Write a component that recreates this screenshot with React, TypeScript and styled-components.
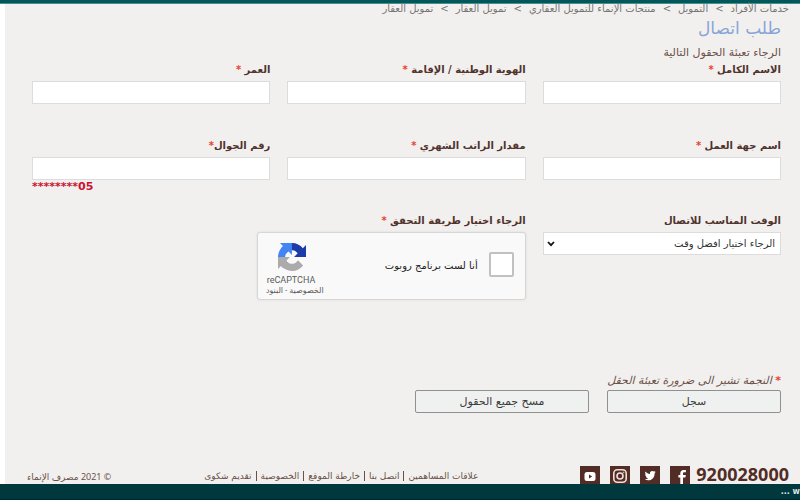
import React from "react";
import styled, { createGlobalStyle } from "styled-components";

const GlobalStyle = createGlobalStyle`
  * { box-sizing: border-box; }
  body {
    margin: 0;
    background: #ffffff;
    color: #4f332c;
    font-family: "DejaVu Sans", "Noto Sans", sans-serif;
    font-size: 11px;
    line-height: 14px;
  }
  a { color: inherit; text-decoration: none; }
  button, input, select { font: inherit; color: inherit; }
`;

const Page = styled.div`
  min-height: 100vh;
  display: flex;
  flex-direction: column;
`;

const TopBar = styled.div`
  height: 4px;
  background: #00585b;
  border-bottom: 1px solid #4f8b8c;
`;

const Content = styled.main`
  flex: 1;
  display: flex;
  flex-direction: column;
  margin-left: 5px;
  padding: 0 19px 0 27px;
  background: #f2f0ef;
`;

const Breadcrumb = styled.nav`
  display: flex;
  gap: 7px;
  margin: -2px -8px 0 0;
  color: #777574;
  font-size: 10px;
  white-space: nowrap;
`;

const Title = styled.h1`
  margin: 1px 0 0;
  color: #87a5d6;
  font-size: 17px;
  font-weight: 400;
  line-height: 22px;
`;

const Intro = styled.p`
  margin: 7px 0 0;
  color: #6b5149;
`;

const Fields = styled.div`
  display: grid;
  grid-template-columns: repeat(3, minmax(0, 1fr));
  column-gap: 17px;
  grid-template-rows: 76px 75px auto;
  margin-top: 3px;
`;

const Field = styled.div`
  display: flex;
  flex-direction: column;
  align-items: stretch;
`;

const Label = styled.label`
  font-size: 10px;
  font-weight: 700;
  margin-bottom: 4px;
  white-space: nowrap;
`;

const Star = styled.span`
  color: #e8402f;
  font-weight: 700;
  font-style: normal;
`;

const TextInput = styled.input`
  width: 100%;
  height: 23px;
  padding: 0 5px;
  border: 1px solid #dddcdc;
  border-radius: 0;
  background: #ffffff;
`;

const Hint = styled.span`
  color: #cc1230;
  font-weight: 700;
  text-align: left;
  direction: ltr;
`;

const SelectWrap = styled.div`
  display: grid;
  align-items: center;
  > * { grid-area: 1 / 1; }
`;

const Select = styled.select`
  appearance: none;
  width: 100%;
  height: 23px;
  padding: 0 5px;
  border: 1px solid #dddcdc;
  border-radius: 0;
  background: #ffffff;
  color: #333333;
  font-size: 10px;
`;

const Chevron = styled.svg`
  justify-self: end;
  margin-left: 4px;
  pointer-events: none;
`;

const Captcha = styled.div`
  width: 269px;
  height: 68px;
  display: flex;
  align-items: center;
  padding: 0 11px 0 9px;
  border: 1px solid #d6d6d6;
  border-radius: 3px;
  background: #f9f9f9;
  box-shadow: 0 0 3px #00000014;
`;

const CaptchaBox = styled.input`
  appearance: none;
  width: 25px;
  height: 25px;
  margin: 0 0 3px;
  border: 2px solid #c1c1c1;
  border-radius: 2px;
  background: #ffffff;
`;

const CaptchaLabel = styled.label`
  flex: 1;
  margin-right: 11px;
  color: #222222;
  font-size: 10px;
`;

const CaptchaBrand = styled.div`
  width: 57px;
  display: flex;
  flex-direction: column;
  padding-top: 6px;
  color: #5b5b5b;
  font-family: Roboto, "DejaVu Sans", sans-serif;
  font-size: 9px;
  line-height: 12px;
  white-space: nowrap;
  direction: ltr;
  > svg { margin: 0 0 3px 11px; }
`;

const CaptchaLinks = styled.div`
  direction: rtl;
  text-align: right;
  font-size: 8px;
  line-height: 10px;
`;

const Note = styled.p`
  margin: 74px 0 0;
  color: #6b5149;
  font-style: italic;
`;

const Actions = styled.div`
  display: flex;
  gap: 18px;
  margin-top: 2px;
`;

const Button = styled.button`
  width: 174px;
  height: 23px;
  padding: 0;
  border: 1px solid #8d9190;
  border-radius: 2px;
  background: #eff0f0;
  color: #3b3b3b;
`;

const Footer = styled.footer`
  display: flex;
  align-items: flex-end;
  margin-top: auto;
  margin-right: -8px;
  color: #69514a;
  font-size: 9px;
  line-height: 14px;
  white-space: nowrap;
`;

const Phone = styled.a`
  color: #512d26;
  font-family: "Noto Sans", sans-serif;
  font-size: 18px;
  font-weight: 700;
  line-height: 19px;
`;

const Social = styled.div`
  display: flex;
  gap: 10px;
  margin-right: 6px;
`;

const SocialLink = styled.a`
  width: 20px;
  height: 18px;
  overflow: hidden;
  background: #512d26;
  > svg { display: block; }
`;

const FooterLinks = styled.nav`
  display: flex;
  margin-right: 102px;
  > a {
    line-height: 10px;
    margin-bottom: 3px;
  }
  > a + a {
    margin-right: 4px;
    padding-right: 4px;
    border-right: 1px solid #69514a;
  }
`;

const Copyright = styled.span`
  margin-right: auto;
  margin-left: -5px;
  font-family: "Noto Sans", "DejaVu Sans", sans-serif;
`;

const BottomBar = styled.div`
  height: 16px;
  display: flex;
  justify-content: flex-end;
  background: #00383d;
  border-bottom: 1px solid #00292d;
  color: #d7e4e5;
  font-size: 8px;
  font-weight: 700;
  line-height: 16px;
`;

const crumbs = [
  "خدمات الأفراد",
  "التمويل",
  "منتجات الإنماء للتمويل العقاري",
  "تمويل العقار",
  "تمويل العقار",
];

const footerLinks = ["علاقات المساهمين", "اتصل بنا", "خارطة الموقع", "الخصوصية", "تقديم شكوى"];

const fields = [
  { id: "name", label: "الاسم الكامل " },
  { id: "identity", label: "الهوية الوطنية / الإقامة " },
  { id: "age", label: "العمر " },
  { id: "employer", label: "اسم جهة العمل " },
  { id: "salary", label: "مقدار الراتب الشهري " },
  { id: "mobile", label: "رقم الجوال", hint: "********05" },
];

const RecaptchaLogo = () => (
  <svg width="28" height="28" viewBox="0 0 64 64" aria-hidden="true">
    <path
      d="M64 31.955l-.033-1.37V4.687l-7.16 7.16C50.948 4.674 42.033.093 32.05.093c-10.4 0-19.622 4.96-25.458 12.64l11.736 11.86a15.55 15.55 0 0 1 4.754-5.334c2.05-1.6 4.952-2.906 8.968-2.906.485 0 .86.057 1.135.163 4.976.393 9.288 3.14 11.828 7.124l-8.307 8.307L64 31.953"
      fill="#1c3aa9"
    />
    <path
      d="M31.862.094l-1.37.033H4.594l7.16 7.16C4.58 13.147 0 22.06 0 32.046c0 10.4 4.96 19.622 12.64 25.458L24.5 45.768a15.55 15.55 0 0 1-5.334-4.754c-1.6-2.05-2.906-4.952-2.906-8.968 0-.485.057-.86.163-1.135.393-4.976 3.14-9.288 7.124-11.828l8.307 8.307L31.86.095"
      fill="#4285f4"
    />
    <path
      d="M.001 32.045l.033 1.37v25.898l7.16-7.16c5.86 7.173 14.774 11.754 24.76 11.754 10.4 0 19.622-4.96 25.458-12.64l-11.736-11.86a15.55 15.55 0 0 1-4.754 5.334c-2.05 1.6-4.952 2.906-8.968 2.906-.485 0-.86-.057-1.135-.163-4.976-.393-9.288-3.14-11.828-7.124l8.307-8.307c-10.522.04-22.4.066-27.295-.005"
      fill="#ababab"
    />
  </svg>
);

const socials = [
  {
    name: "Facebook",
    art: <path d="M11 18V11.500H13.400L13.800 9H11V7.600C11 6.700 11.400 6.200 12.500 6.200H13.900V4H11.700C9.400 4 8.300 5.300 8.300 7.200V9H6.400V11.500H8.300V18Z" fill="#fff" transform="translate(2 0)" />,
  },
  {
    name: "Twitter",
    art: <path d="M5 13.200C6.400 13.200 7.300 12.900 8 12.300C6.900 12.200 6.200 11.500 5.900 10.600H6.800C5.700 10.200 5.100 9.400 5.100 8.200L6 8.500C5.100 7.700 4.900 6.500 5.400 5.500C6.700 7 8.200 7.800 10 7.900C9.600 5.900 11 4.900 12.200 4.900C12.900 4.900 13.500 5.200 13.900 5.600L15.400 5.100L14.500 6.400L15.700 6.100L14.600 7.400C14.700 11.500 11.700 14.300 8.200 14.300C7 14.300 5.900 13.900 5 13.200Z" fill="#fff" />,
  },
  {
    name: "Instagram",
    art: (
      <g fill="none" stroke="#f1dfd9" strokeWidth="1.600">
        <rect x="3.800" y="3.800" width="12.400" height="12.400" rx="3.500" />
        <circle cx="10" cy="10" r="3" />
        <circle cx="13.600" cy="6.400" r=".4" strokeWidth="1" />
      </g>
    ),
  },
  {
    name: "YouTube",
    art: (
      <>
        <rect x="4.500" y="6" width="11" height="9" rx="2.500" fill="#fff" />
        <path d="M9 8.500V12.500L12.200 10.500Z" fill="#512d26" />
      </>
    ),
  },
];

export default function App() {
  return (
    <Page dir="rtl" lang="ar">
      <GlobalStyle />
      <TopBar />
      <Content>
        <Breadcrumb>
          {crumbs.map((crumb, i) => (
            <React.Fragment key={i}>
              {i > 0 && <span>&gt;</span>}
              <a href="#">{crumb}</a>
            </React.Fragment>
          ))}
        </Breadcrumb>
        <Title>طلب اتصال</Title>
        <Intro>الرجاء تعبئة الحقول التالية</Intro>
        <form onSubmit={(e) => e.preventDefault()}>
          <Fields>
            {fields.map((f) => (
              <Field key={f.id}>
                <Label htmlFor={f.id}>
                  {f.label}
                  <Star>*</Star>
                </Label>
                <TextInput id={f.id} type="text" />
                {f.hint && <Hint>{f.hint}</Hint>}
              </Field>
            ))}
            <Field>
              <Label htmlFor="time">الوقت المناسب للاتصال</Label>
              <SelectWrap>
                <Select id="time">
                  <option>الرجاء اختيار افضل وقت</option>
                </Select>
                <Chevron width="8" height="6" viewBox="0 0 8 6" aria-hidden="true">
                  <path d="M1 1L4 4.200L7 1" fill="none" stroke="#111" strokeWidth="1.800" />
                </Chevron>
              </SelectWrap>
            </Field>
            <Field>
              <Label as="span">
                الرجاء اختيار طريقة التحقق <Star>*</Star>
              </Label>
              <Captcha>
                <CaptchaBox id="robot" type="checkbox" />
                <CaptchaLabel htmlFor="robot">أنا لست برنامج روبوت</CaptchaLabel>
                <CaptchaBrand>
                  <RecaptchaLogo />
                  <span>reCAPTCHA</span>
                  <CaptchaLinks>
                    <a href="#">الخصوصية</a> - <a href="#">البنود</a>
                  </CaptchaLinks>
                </CaptchaBrand>
              </Captcha>
            </Field>
          </Fields>
          <Note>
            <Star>*</Star> النجمة تشير الى ضرورة تعبئة الحقل
          </Note>
          <Actions>
            <Button type="submit">سجل</Button>
            <Button type="reset">مسح جميع الحقول</Button>
          </Actions>
        </form>
        <Footer>
          <Phone href="tel:920028000">920028000</Phone>
          <Social>
            {socials.map((s) => (
              <SocialLink key={s.name} href="#" aria-label={s.name}>
                <svg width="20" height="20" viewBox="0 0 20 20">{s.art}</svg>
              </SocialLink>
            ))}
          </Social>
          <FooterLinks>
            {footerLinks.map((text) => (
              <a key={text} href="#">{text}</a>
            ))}
          </FooterLinks>
          <Copyright>© 2021 مصرف الإنماء</Copyright>
        </Footer>
      </Content>
      <BottomBar dir="ltr">... w</BottomBar>
    </Page>
  );
}
